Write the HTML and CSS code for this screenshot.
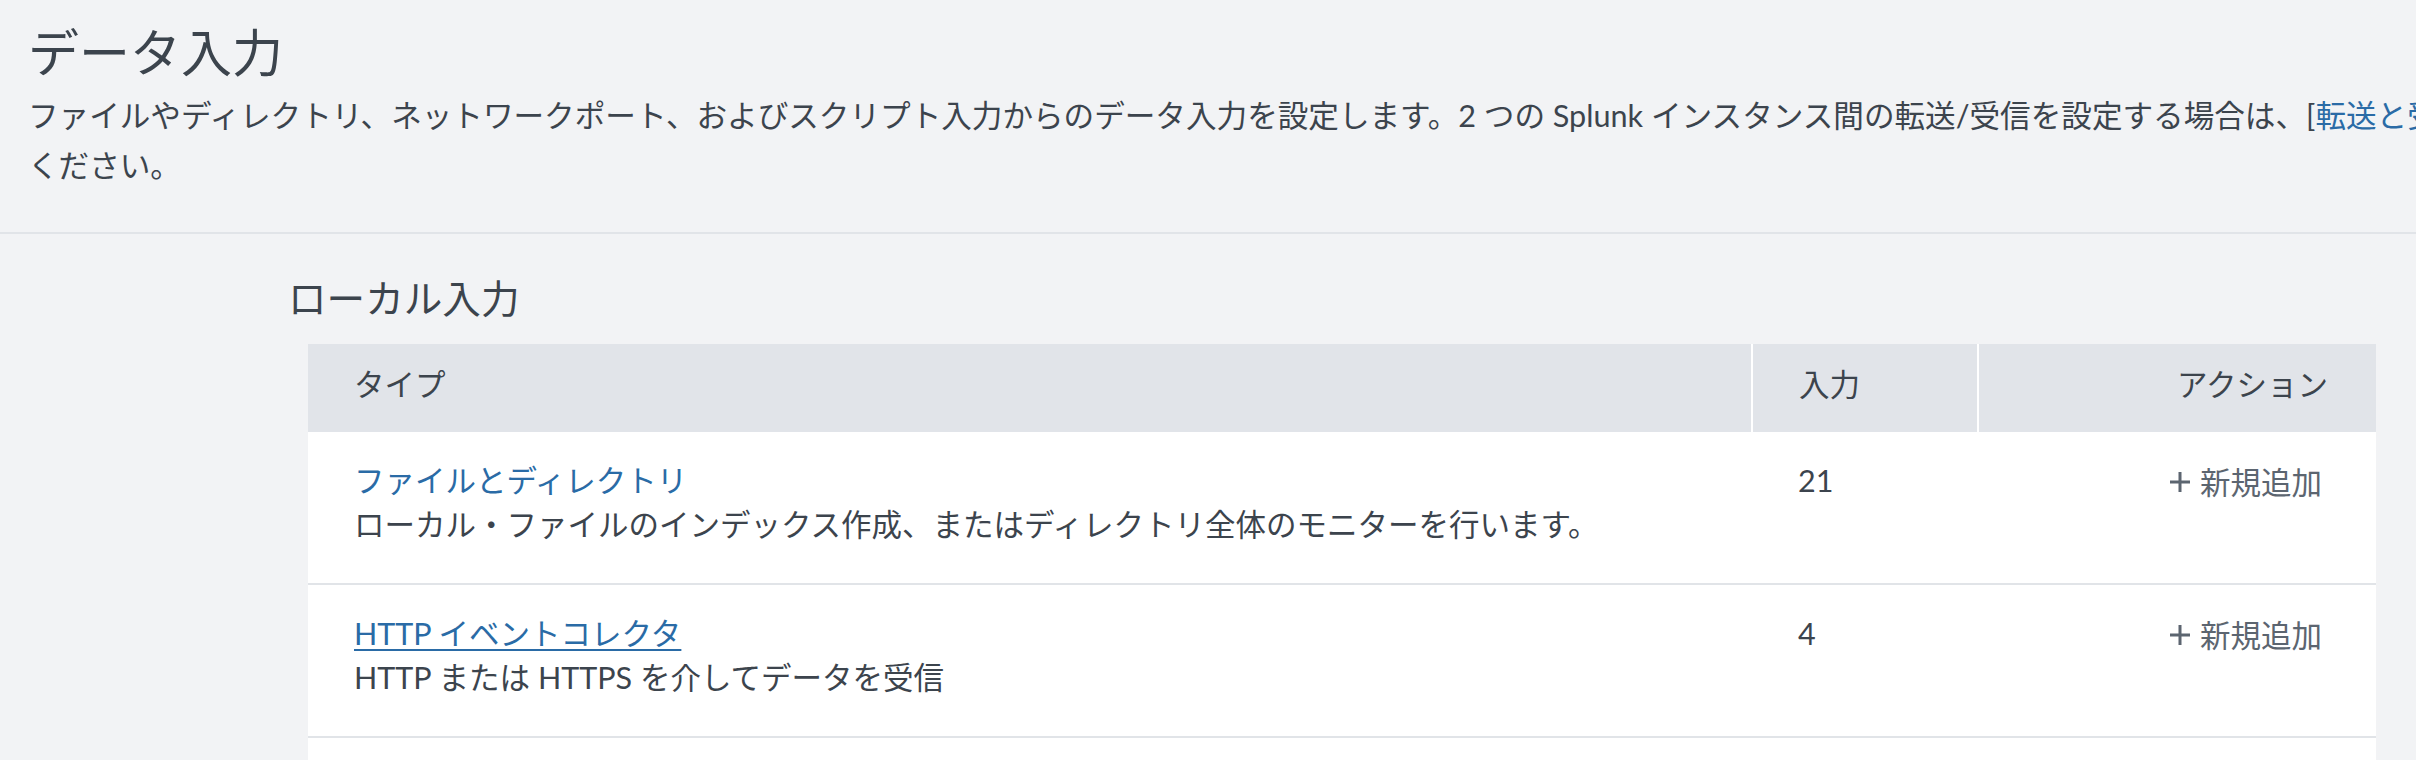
FILE: index.html
```html
<!DOCTYPE html>
<html lang="ja">
<head>
<meta charset="utf-8">
<title>データ入力</title>
<link rel="stylesheet" href="styles.css">
</head>
<body>
<header class="page-header">
  <h1 class="page-title">データ入力</h1>
  <p class="page-desc">ファイルやディレクトリ、ネットワークポート、およびスクリプト入力からのデータ入力を設定します。2 つの Splunk インスタンス間の転送/受信を設定する場合は、[<a class="link" href="#">転送と受信</a>]を参照してください。</p>
</header>
<main class="content">
  <h2 class="section-title">ローカル入力</h2>
  <table class="inputs">
    <thead>
      <tr>
        <th class="col-type">タイプ</th>
        <th class="col-count">入力</th>
        <th class="col-action">アクション</th>
      </tr>
    </thead>
    <tbody>
      <tr>
        <td class="col-type">
          <a class="link" href="#">ファイルとディレクトリ</a>
          <div class="type-desc">ローカル・ファイルのインデックス作成、またはディレクトリ全体のモニターを行います。</div>
        </td>
        <td class="col-count">21</td>
        <td class="col-action"><a class="add" href="#"><svg class="plus" viewBox="0 0 20 20" aria-hidden="true"><path d="M10 0v20M0 10h20"/></svg>新規追加</a></td>
      </tr>
      <tr>
        <td class="col-type">
          <a class="link link-underlined" href="#">HTTP イベントコレクタ</a>
          <div class="type-desc">HTTP または HTTPS を介してデータを受信</div>
        </td>
        <td class="col-count">4</td>
        <td class="col-action"><a class="add" href="#"><svg class="plus" viewBox="0 0 20 20" aria-hidden="true"><path d="M10 0v20M0 10h20"/></svg>新規追加</a></td>
      </tr>
      <tr>
        <td class="col-type">
          <a class="link" href="#">TCP / UDP</a>
          <div class="type-desc">TCP または UDP ポートでデータを待機します。</div>
        </td>
        <td class="col-count">0</td>
        <td class="col-action"><a class="add" href="#"><svg class="plus" viewBox="0 0 20 20" aria-hidden="true"><path d="M10 0v20M0 10h20"/></svg>新規追加</a></td>
      </tr>
    </tbody>
  </table>
</main>
</body>
</html>
```

FILE: styles.css
```css
html, body {
  margin: 0;
  padding: 0;
}

body {
  background: #f2f3f5;
  color: #3c444d;
  font-family: Lato, "Noto Sans CJK JP", sans-serif;
  overflow: hidden;
  width: 2416px;
  height: 760px;
}

.page-header {
  padding: 23px 0 41px 28px;
  border-bottom: 2px solid #e1e4e8;
  width: 2388px;
}

.page-title {
  margin: 0;
  font-size: 51px;
  line-height: 60px;
  font-weight: normal;
}

.page-desc {
  margin: 8px 0 0;
  font-size: 30.6px;
  line-height: 50px;
  width: 2616px;
}

.link {
  color: #2a6ba6;
  text-decoration: none;
}

.link-underlined {
  text-decoration: underline;
  text-decoration-thickness: 2px;
  text-underline-offset: 4px;
}

.content {
  padding: 40px 40px 0 288px;
}

.section-title {
  margin: 0 0 22px;
  font-size: 38.6px;
  line-height: 48px;
  font-weight: normal;
}

.inputs {
  margin-left: 20px;
  width: 2068px;
  border-collapse: collapse;
  background: #ffffff;
  font-size: 30.5px;
}

.inputs th {
  background: #e1e4e9;
  font-weight: normal;
  height: 88px;
  padding: 0 46px 8px;
  text-align: left;
  line-height: 40px;
  box-sizing: border-box;
}

.inputs th + th {
  border-left: 2px solid #ffffff;
}

.inputs th.col-action {
  text-align: right;
  padding-right: 48px;
}

.inputs td {
  vertical-align: top;
  padding: 26px 46px 37px;
  line-height: 44px;
  border-bottom: 2px solid #e1e4e8;
}

.inputs .col-type {
  width: 1352px;
}

.inputs .col-count {
  width: 134px;
}

.inputs td.col-action {
  text-align: right;
  padding-right: 54px;
}

.type-desc {
  color: #3c444d;
}

.add {
  color: #5c6570;
  text-decoration: none;
  display: inline-flex;
  align-items: center;
}

.plus {
  width: 20px;
  height: 20px;
  margin-right: 10px;
  fill: none;
  stroke: #5c6570;
  stroke-width: 3;
}
```
